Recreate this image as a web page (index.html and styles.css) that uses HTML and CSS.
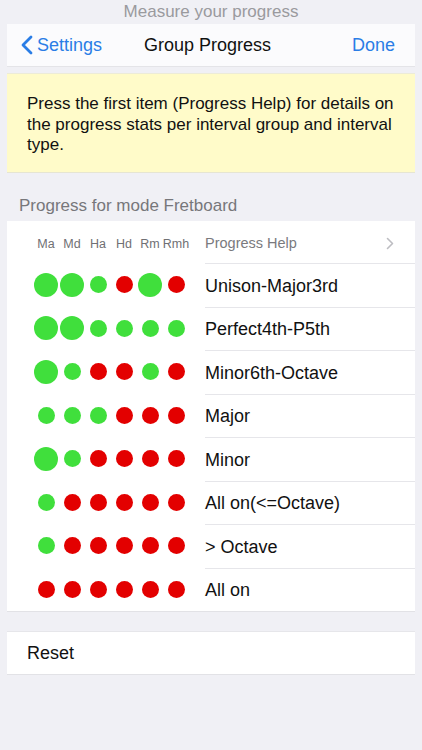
FILE: index.html
```html
<!DOCTYPE html>
<html lang="en">

<head>
    <meta charset="utf-8">
    <meta name="viewport" content="width=device-width, initial-scale=1.0">
    <title>Group Progress</title>
    <link rel="stylesheet" href="styles.css">
</head>

<body>
    <div class="top_title">Measure your progress</div>
    <div class="page">
        <nav class="navbar">
            <div class="nav_back">
                <svg width="13" height="20" viewBox="0 0 13 20"><path d="M11 2 L3 10 L11 18" fill="none" stroke="#2a7de6" stroke-width="2.8" stroke-linecap="round" stroke-linejoin="round"/></svg>
                <span>Settings</span>
            </div>
            <div class="nav_title">Group Progress</div>
            <div class="nav_done">Done</div>
        </nav>

        <div class="hint">
            <p>Press the first item (Progress Help) for details on the progress stats per interval group and interval type.</p>
        </div>

        <h2 class="section_head">Progress for mode Fretboard</h2>

        <section class="card">
            <div class="row head_row">
                <div class="dots">
                    <span>Ma</span><span>Md</span><span>Ha</span><span>Hd</span><span>Rm</span><span>Rmh</span>
                </div>
                <div class="label help">
                    Progress Help
                    <svg width="8" height="13" viewBox="0 0 8 13"><path d="M1.5 1.5 L6.5 6.5 L1.5 11.5" fill="none" stroke="#bdbdc2" stroke-width="1.6" stroke-linecap="round" stroke-linejoin="round"/></svg>
                </div>
            </div>
            <div class="row">
                <div class="dots"><i class="big"></i><i class="big"></i><i class="ok"></i><i class="bad"></i><i class="big"></i><i class="bad"></i></div>
                <div class="label">Unison-Major3rd</div>
            </div>
            <div class="row">
                <div class="dots"><i class="big"></i><i class="big"></i><i class="ok"></i><i class="ok"></i><i class="ok"></i><i class="ok"></i></div>
                <div class="label">Perfect4th-P5th</div>
            </div>
            <div class="row">
                <div class="dots"><i class="big"></i><i class="ok"></i><i class="bad"></i><i class="bad"></i><i class="ok"></i><i class="bad"></i></div>
                <div class="label">Minor6th-Octave</div>
            </div>
            <div class="row">
                <div class="dots"><i class="ok"></i><i class="ok"></i><i class="ok"></i><i class="bad"></i><i class="bad"></i><i class="bad"></i></div>
                <div class="label">Major</div>
            </div>
            <div class="row">
                <div class="dots"><i class="big"></i><i class="ok"></i><i class="bad"></i><i class="bad"></i><i class="bad"></i><i class="bad"></i></div>
                <div class="label">Minor</div>
            </div>
            <div class="row">
                <div class="dots"><i class="ok"></i><i class="bad"></i><i class="bad"></i><i class="bad"></i><i class="bad"></i><i class="bad"></i></div>
                <div class="label">All on(&lt;=Octave)</div>
            </div>
            <div class="row">
                <div class="dots"><i class="ok"></i><i class="bad"></i><i class="bad"></i><i class="bad"></i><i class="bad"></i><i class="bad"></i></div>
                <div class="label">&gt; Octave</div>
            </div>
            <div class="row">
                <div class="dots"><i class="bad"></i><i class="bad"></i><i class="bad"></i><i class="bad"></i><i class="bad"></i><i class="bad"></i></div>
                <div class="label">All on</div>
            </div>
        </section>

        <section class="card reset">Reset</section>
    </div>
</body>

</html>
```

FILE: styles.css
```css
body {
    margin: 0;
    background-color: #f0f0f5;
    font-family: "Liberation Sans", Arial, sans-serif;
    color: #111;
}

.top_title {
    height: 24px;
    line-height: 24px;
    text-align: center;
    font-size: 17px;
    color: #9a9a9e;
}

.page {
    margin: 0 7px;
}

.navbar {
    height: 42px;
    background-color: #fbfbfd;
    display: flex;
    align-items: center;
    justify-content: space-between;
    padding: 0 20px 0 13px;
    font-size: 18px;
    border-bottom: 1px solid #e4e4e8;
}

.nav_back {
    display: flex;
    align-items: center;
    gap: 4px;
    color: #2a7de6;
    width: 90px;
}

.nav_title {
    color: #111;
}

.nav_done {
    color: #2a7de6;
    width: 90px;
    text-align: right;
}

.hint {
    margin-top: 6px;
    background-color: #fffbc9;
    height: 100px;
    padding: 4px 20px 0;
    display: flex;
    align-items: center;
    border-top: 1px solid #ecebd8;
    border-bottom: 1px solid #e6e5d2;
    box-sizing: border-box;
}

.hint p {
    margin: 0;
    font-size: 17px;
    line-height: 20.5px;
}

.section_head {
    margin: 0;
    height: 48px;
    box-sizing: border-box;
    padding: 23px 0 0 12px;
    font-size: 17px;
    font-weight: normal;
    color: #77777b;
}

.card {
    background-color: #fff;
    border-bottom: 1px solid #e2e2e6;
}

.row {
    display: flex;
    height: 43.5px;
}

.head_row {
    height: 42px;
}

.dots {
    display: grid;
    grid-template-columns: repeat(6, 26px);
    align-items: center;
    justify-items: center;
    padding-left: 26px;
    width: 172px;
}

.head_row .dots {
    padding-top: 3px;
}

.dots span {
    font-size: 12.5px;
    color: #707074;
}

.dots i {
    display: block;
    border-radius: 50%;
    width: 17px;
    height: 17px;
}

.dots .big {
    width: 24px;
    height: 24px;
    background-color: #40df3c;
}

.dots .ok {
    background-color: #40df3c;
}

.dots .bad {
    background-color: #e30000;
}

.label {
    flex: 1;
    display: flex;
    align-items: center;
    padding-top: 2px;
    font-size: 18px;
    border-top: 1px solid #e6e6ea;
}

.head_row .label {
    border-top: none;
}

.help {
    justify-content: space-between;
    padding-right: 21px;
    font-size: 14.5px;
    color: #7a7a7e;
}

.reset {
    margin-top: 19px;
    height: 42px;
    display: flex;
    align-items: center;
    padding-left: 20px;
    font-size: 18px;
    border-top: 1px solid #e6e6ea;
}
```
